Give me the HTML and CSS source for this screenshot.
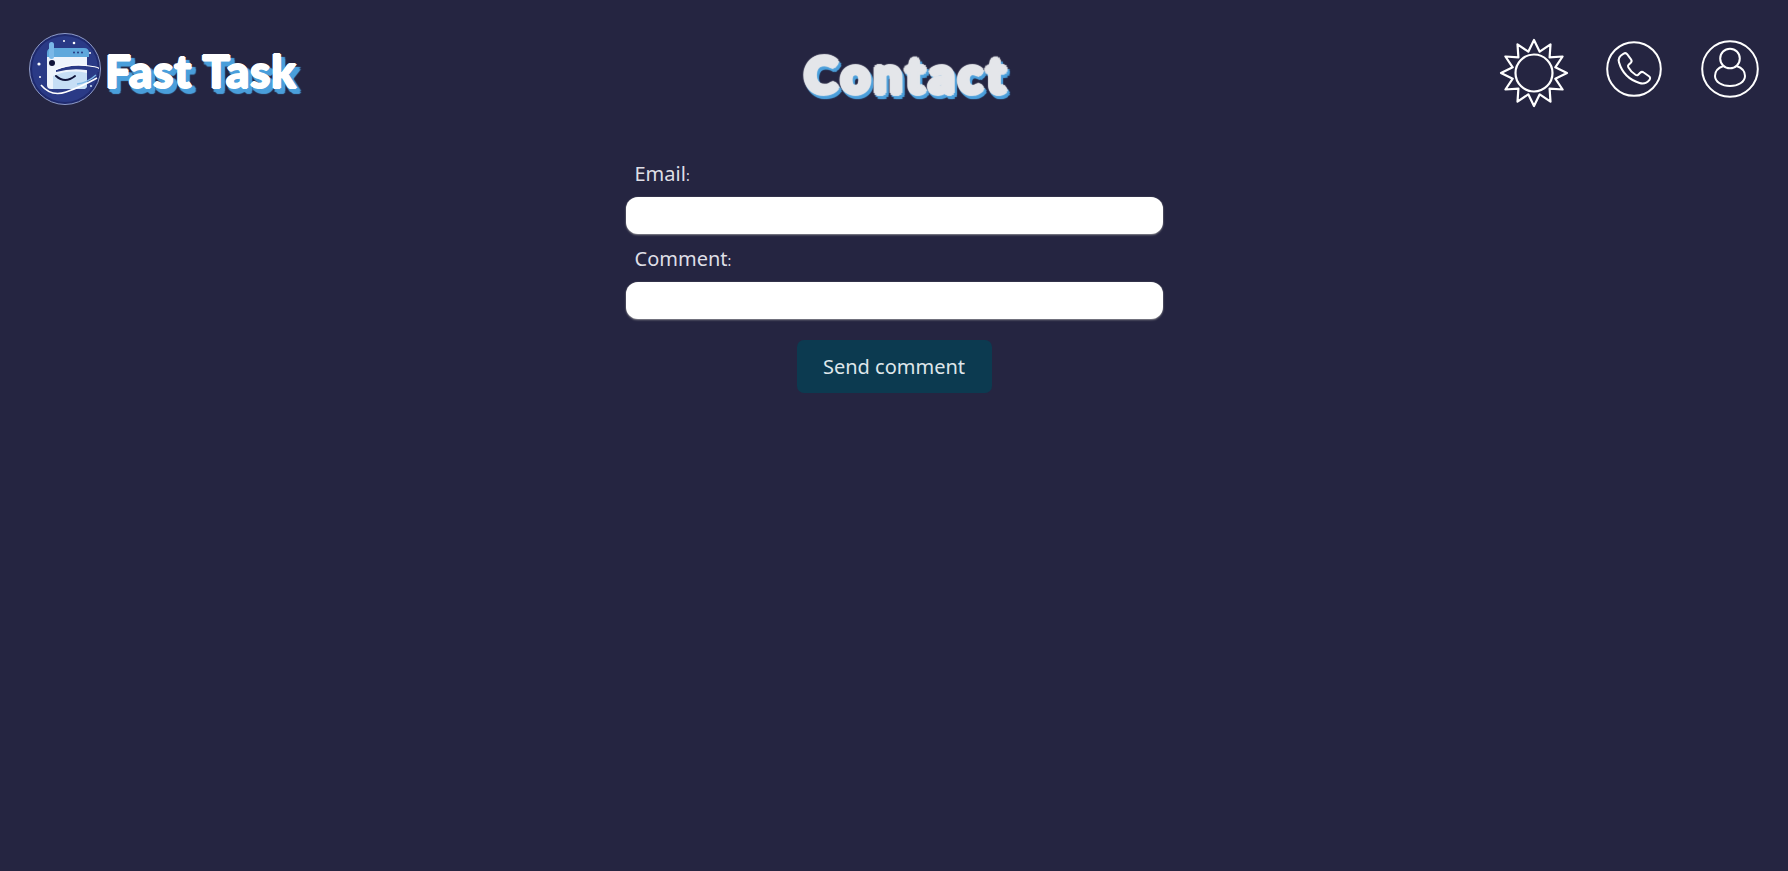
FILE: index.html
```html
<!DOCTYPE html>
<html lang="en">
<head>
    <meta charset="UTF-8">
    <meta name="viewport" content="width=device-width, initial-scale=1.0">
    <title>Contact</title>
    <link rel="stylesheet" href="styles.css">
</head>
<body>
    <header class="header">
        <a class="brand" href="#">
            <svg class="brand-logo" viewBox="0 0 72 72" fill="none">
                <circle cx="36" cy="36" r="35.500" fill="#1f2a6e" stroke="#8f9cc9" stroke-width="1"/>
                <circle cx="36" cy="36" r="33" fill="#2a3a86"/>
                <path d="M18 20q0-5 5-5h32q5 0 5 5v4H18z" fill="#5fa8dc"/>
                <path d="M18 24h40v28q0 4-4 4H22q-4 0-4-4z" fill="#eef4fc"/>
                <path d="M24 43q16-7 34-3v12q0 4-4 4H24z" fill="#c6def5"/>
                <rect x="20" y="9" width="5" height="17" rx="2.500" fill="#7ab8e8"/>
                <circle cx="45" cy="19.500" r="1" fill="#27377f"/>
                <circle cx="49" cy="19.500" r="1" fill="#27377f"/>
                <circle cx="53" cy="19.500" r="1" fill="#27377f"/>
                <circle cx="23" cy="30" r="3" fill="#10143a"/>
                <path d="M27 43q9 8 19 0" stroke="#10143a" stroke-width="2" stroke-linecap="round"/>
                <path d="M27 37q15-6 30-4l13 3v3l-13-2q-15-2-30 2z" fill="#2a3a86"/>
                <path d="M27 36.500q15-6 30-4t12 3" stroke="#fff" stroke-width="1.200"/>
                <path d="M12 52q10 12 25 7t31-14" stroke="#fff" stroke-width="1.600"/>
                <path d="M48 51q10-1 19-9" stroke="#7fb9e6" stroke-width="1.300"/>
                <circle cx="35" cy="8" r="1" fill="#fff"/>
                <circle cx="45" cy="10" r="1.300" fill="#fff"/>
                <circle cx="10" cy="31" r="1.600" fill="#fff"/>
                <circle cx="11" cy="44" r="1" fill="#fff"/>
                <circle cx="61" cy="20" r="1" fill="#fff"/>
                <circle cx="62" cy="53" r="1" fill="#cfe0f5"/>
            </svg>
            <span class="brand-name">Fast Task</span>
        </a>
        <h1 class="page-title">Contact</h1>
        <nav class="header-icons">
            <svg class="icon-sun" viewBox="-35 -35 70 70" fill="none" stroke="#fff" stroke-width="2.200" stroke-linejoin="round">
                <polygon points="0,-33 5.700,-21.300 16.500,-28.600 15.600,-15.600 28.600,-16.500 21.300,-5.700 33,0 21.300,5.700 28.600,16.500 15.600,15.600 16.500,28.600 5.700,21.300 0,33 -5.700,21.300 -16.500,28.600 -15.600,15.600 -28.600,16.500 -21.300,5.700 -33,0 -21.300,-5.700 -28.600,-16.500 -15.600,-15.600 -16.500,-28.600 -5.700,-21.300"/>
                <circle r="18.500"/>
            </svg>
            <svg class="icon-phone" viewBox="0 0 56 56" fill="none" stroke="#fff" stroke-width="2" stroke-linejoin="round">
                <circle cx="28" cy="28" r="26.800"/>
                <path d="M17.500 12.800c1.400-1 2.800-.8 3.800.5l3.700 5c.9 1.200.8 2.400-.2 3.400l-2.200 2.100c-.7.7-.8 1.500-.3 2.400 1.800 3.300 4.300 5.900 7.500 7.800.9.500 1.700.4 2.400-.3l2-2c1-1 2.300-1.100 3.500-.2l5.300 3.700c1.300.9 1.500 2.300.5 3.600-2.600 3.300-6.200 4.400-10 3.200-10.200-3.200-17.600-10.800-20.500-20.600-1-3.500.2-6.500 4.300-8.600z"/>
            </svg>
            <svg class="icon-user" viewBox="0 0 58 58" fill="none" stroke="#fff" stroke-width="2">
                <circle cx="29" cy="29" r="27.800"/>
                <circle cx="29" cy="18.500" r="9.800"/>
                <path d="M22.500 26c-5.500 1.800-8.500 5.800-8.500 10 0 6 7 10 15 10s15-4 15-10c0-4.200-3-8.200-8.500-10"/>
            </svg>
        </nav>
    </header>

    <main class="main">
        <form class="contact-form">
            <label class="field-label" for="email">Email<span class="colon">:</span></label>
            <input class="field-input" type="text" id="email" name="email">
            <label class="field-label" for="comment">Comment<span class="colon">:</span></label>
            <input class="field-input" type="text" id="comment" name="comment">
            <button class="send-btn" type="submit">Send comment</button>
        </form>
    </main>
</body>
</html>
```

FILE: styles.css
```css
body {
    margin: 0;
    padding: 0;
    background-color: #252541;
    font-family: "Noto Sans", Arial, sans-serif;
    min-height: 871px;
    box-sizing: border-box;
}

.header {
    display: flex;
    justify-content: space-between;
    align-items: center;
    padding: 33px 29px 0 29px;
    height: 72px;
}

.brand {
    display: flex;
    align-items: center;
    gap: 4px;
    text-decoration: none;
    width: 286px;
}

.brand-logo {
    width: 72px;
    height: 72px;
    flex: none;
}

/* round outline made of shadows, the blue copy sits behind it */
.brand-name {
    font-family: Lato, sans-serif;
    font-weight: 900;
    font-size: 46px;
    line-height: 56px;
    margin-top: 3px;
    white-space: nowrap;
    color: #fff;
    letter-spacing: .7px;
    text-shadow:
        1px 0 0 #fff, -1px 0 0 #fff, 0 1px 0 #fff, 0 -1px 0 #fff,
        3px 3px 1px #4b9fdb, 5px 3px 1px #4b9fdb, 3px 5px 1px #4b9fdb, 5px 5px 1px #4b9fdb,
        1px 4px 1px #4b9fdb, 4px 6px 1px #4b9fdb;
}

.page-title {
    margin: 9px 0 0 0;
    font-family: Lato, sans-serif;
    font-weight: 900;
    font-size: 50px;
    line-height: 72px;
    color: #e4e6ea;
    letter-spacing: 4px;
    text-shadow:
        3px 0 1px #e4e6ea, -3px 0 1px #e4e6ea, 0 3px 1px #e4e6ea, 0 -3px 1px #e4e6ea,
        2px 2px 1px #e4e6ea, -2px 2px 1px #e4e6ea, 2px -2px 1px #e4e6ea, -2px -2px 1px #e4e6ea,
        5px 4px 1px #4b9fdb, 3px 6px 1px #4b9fdb, 1px 6px 1px #4b9fdb, 5px 2px 1px #4b9fdb,
        -1px 4px 1px #4b9fdb;
}

.header-icons {
    display: flex;
    align-items: center;
    gap: 39px;
}

.icon-sun {
    width: 70px;
    height: 70px;
    margin-top: 7px;
}

.icon-phone {
    width: 56px;
    height: 56px;
    margin-left: -2px;
}

.icon-user {
    width: 58px;
    height: 58px;
}

.main {
    display: flex;
    justify-content: center;
    padding-top: 55px;
}

.contact-form {
    width: 537px;
    display: flex;
    flex-direction: column;
}

.field-label {
    color: #dfdfe6;
    font-size: 20px;
    line-height: 27px;
    margin: 0 0 8px 9px;
}

.colon {
    font-size: 14px;
}

.field-input {
    height: 37px;
    box-sizing: border-box;
    border: none;
    border-radius: 12px;
    background-color: #fff;
    box-shadow: 0 1px 2px #8a8a90, 0 0 1px #8a8a90;
    margin-bottom: 11px;
    padding: 0 10px;
}

.send-btn {
    align-self: center;
    width: 195px;
    height: 53px;
    margin-top: 10px;
    background-color: #0c3a50;
    color: #dfe6ea;
    font-family: "Noto Sans", Arial, sans-serif;
    font-size: 20px;
    border: none;
    border-radius: 7px;
    cursor: pointer;
}
```
